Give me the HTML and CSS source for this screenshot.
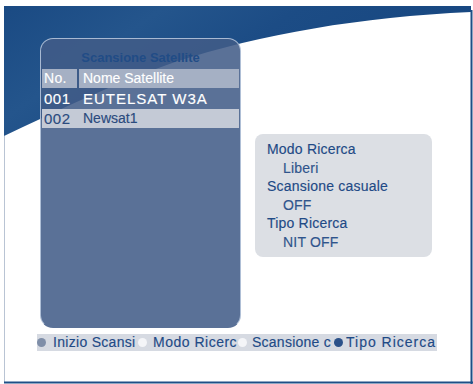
FILE: index.html
```html
<!DOCTYPE html>
<html>
<head>
<meta charset="utf-8">
<link rel="stylesheet" href="styles.css">
</head>
<body>
<div class="screen">
  <svg class="bg" width="473" height="384" viewBox="0 0 473 384">
    <defs>
      <linearGradient id="sheen" x1="0" y1="0" x2="1" y2="0.4">
        <stop offset="0" stop-color="#1a4a83"/>
        <stop offset="0.3" stop-color="#24558c"/>
        <stop offset="0.55" stop-color="#1c4c85"/>
        <stop offset="1" stop-color="#164680"/>
      </linearGradient>
    </defs>
    <path d="M4,6 H471 V12 C360,17 262,34 175,62 C112,84 55,112 4,136 Z" fill="url(#sheen)"/>
    <line x1="4.5" y1="136" x2="4.5" y2="383" stroke="#b9c4d4" stroke-width="1"/>
    <line x1="471.5" y1="10" x2="471.5" y2="384" stroke="#1f4f86" stroke-width="2"/>
    <line x1="4" y1="382.5" x2="473" y2="382.5" stroke="#1f4f86" stroke-width="2"/>
  </svg>

  <div class="main">
    <section class="panel">
      <h1 class="title">Scansione Satellite</h1>
      <div class="row head">
        <span class="num cell">No.</span>
        <span class="name cell">Nome Satellite</span>
      </div>
      <div class="row">
        <span class="num">001</span>
        <span class="name caps">EUTELSAT W3A</span>
      </div>
      <div class="row sel">
        <span class="num">002</span>
        <span class="name">Newsat1</span>
      </div>
    </section>

    <section class="info">
      <div class="label">Modo Ricerca</div>
      <div class="value">Liberi</div>
      <div class="label">Scansione casuale</div>
      <div class="value">OFF</div>
      <div class="label">Tipo Ricerca</div>
      <div class="value">NIT OFF</div>
    </section>
  </div>

  <div class="hints">
    <div class="hint h1"><span class="dot gray"></span><span class="txt">Inizio Scansi</span></div>
    <div class="hint h2"><span class="dot white"></span><span class="txt">Modo Ricerc</span></div>
    <div class="hint h3"><span class="dot white"></span><span class="txt">Scansione c</span></div>
    <div class="hint h4"><span class="dot blue"></span><span class="txt">Tipo Ricerca</span></div>
  </div>
</div>
</body>
</html>
```

FILE: styles.css
```css
html, body {
  margin: 0;
  padding: 0;
  background: #ffffff;
}

.screen {
  position: relative;
  width: 473px;
  height: 384px;
  overflow: hidden;
  font-family: "Liberation Sans", Arial, sans-serif;
  font-size: 14px;
  -webkit-text-stroke: 0.15px currentColor;
}

.bg {
  position: absolute;
  left: 0;
  top: 0;
}

.main {
  position: relative;
  display: flex;
  align-items: flex-start;
  padding: 38px 0 0 40px;
}

.panel {
  width: 197px;
  height: 288px;
  border-radius: 13px;
  background: rgba(66, 92, 136, 0.87);
  border: 1px solid rgba(205, 218, 236, 0.75);
  border-bottom-color: transparent;
  display: flex;
  flex-direction: column;
  padding: 0 1px;
}

.title {
  margin: 9px 0 0 0;
  height: 20px;
  font-size: 13px;
  font-weight: bold;
  color: #214c86;
  text-align: center;
  line-height: 20px;
  -webkit-text-stroke: 0;
}

.row {
  display: flex;
  height: 19px;
  line-height: 19px;
  color: #ffffff;
  margin-top: 1px;
}

.row.head {
  gap: 2px;
}

.cell {
  background: #a5b0c4;
}

.num {
  width: 36px;
  padding-left: 2px;
  box-sizing: border-box;
  font-size: 15px;
  letter-spacing: 0.5px;
}

.head .num {
  width: 35px;
  font-size: 14px;
  letter-spacing: 0.3px;
}

.name {
  flex: 1;
  padding-left: 5px;
}

.head .name {
  padding-left: 4px;
}

.caps {
  font-size: 15px;
  letter-spacing: 1px;
}

.row.sel {
  background: #c4cad6;
  color: #2b4b7e;
}

.info {
  margin: 96px 0 0 14px;
  width: 165px;
  height: 117px;
  border-radius: 8px;
  background: #dcdfe4;
  padding: 6px 0 0 12px;
  color: #1f4a86;
  letter-spacing: 0.2px;
}

.label, .value {
  height: 18.5px;
  line-height: 18.5px;
}

.value {
  padding-left: 16px;
  color: #2f548c;
}

.hints {
  position: relative;
  display: grid;
  grid-template-columns: 100px 100px 97px 103px;
  margin: 6px 0 0 37px;
  width: 400px;
  height: 17px;
  background: #d6dae2;
  line-height: 17px;
  color: #1f4a86;
}

.hint {
  display: flex;
  align-items: center;
}

.dot {
  flex: none;
  width: 9px;
  height: 9px;
  border-radius: 50%;
}

.dot.gray { background: #7f8ea8; }
.dot.white { background: #f4f5f8; }
.dot.blue { background: #2b5189; }

.h1 .dot { margin: 0 7px 0 0; }
.h2 .dot { margin: 0 6px 0 1px; }
.h3 .dot { margin: 0 5px 0 1px; }
.h4 .dot { margin: 0 3px 0 0; }

.txt {
  white-space: nowrap;
}

.h1 .txt { letter-spacing: 0.3px; }
.h2 .txt { letter-spacing: 0.5px; }
.h3 .txt { letter-spacing: 0.25px; }
.h4 .txt { letter-spacing: 1px; }
```
